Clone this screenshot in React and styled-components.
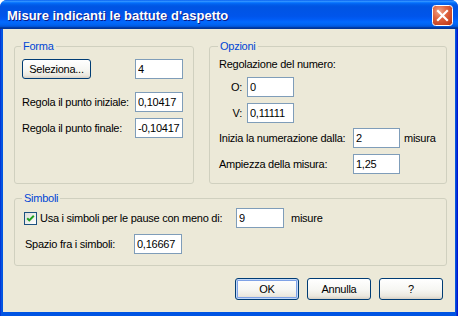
import React from "react";
import styled, { createGlobalStyle } from "styled-components";

const GlobalStyle = createGlobalStyle`
  html, body {
    margin: 0;
    padding: 0;
    background: #ffffff;
  }
  body {
    font-family: "Liberation Sans", Arial, sans-serif;
    font-size: 11px;
    letter-spacing: -0.25px;
    color: #000000;
  }
`;

const CloseIcon = () => (
  <svg width="21" height="21" viewBox="0 0 21 21">
    <defs>
      <radialGradient id="closeFill" cx="35%" cy="30%" r="80%">
        <stop offset="0%" stopColor="#F0A58A" />
        <stop offset="45%" stopColor="#E06540" />
        <stop offset="100%" stopColor="#C13A1A" />
      </radialGradient>
    </defs>
    <rect x="0.5" y="0.5" width="20" height="20" rx="3" fill="url(#closeFill)" stroke="#ffffff" />
    <path d="M6 6 L15 15 M15 6 L6 15" stroke="#ffffff" strokeWidth="2.2" strokeLinecap="square" />
  </svg>
);

const CheckIcon = () => (
  <svg width="13" height="13" viewBox="0 0 13 13">
    <defs>
      <linearGradient id="boxFill" x1="0" y1="0" x2="1" y2="1">
        <stop offset="0%" stopColor="#DCDCD7" />
        <stop offset="100%" stopColor="#FFFFFF" />
      </linearGradient>
    </defs>
    <rect x="0.5" y="0.5" width="12" height="12" fill="url(#boxFill)" stroke="#1C5180" />
    <path d="M3.2 6.2 L5.3 8.4 L9.8 3.8" fill="none" stroke="#21A121" strokeWidth="2" />
  </svg>
);

export default function App() {
  return (
    <>
      <GlobalStyle />
      <Window>
        <TitleBar>
          <Title>Misure indicanti le battute d'aspetto</Title>
          <CloseButton>
            <CloseIcon />
          </CloseButton>
        </TitleBar>
        <Body>
          <GroupRow>
            <Group $w={180} $pad="6px 8px 8px 7px">
              <Legend>Forma</Legend>
              <Row>
                <Cell $w={113}>
                  <Button $w={69} $h={20}>Seleziona...</Button>
                </Cell>
                <Field $w={48} defaultValue="4" />
              </Row>
              <Row $mt={13}>
                <Cell $w={113}>Regola il punto iniziale:</Cell>
                <Field $w={48} defaultValue="0,10417" />
              </Row>
              <Row $mt={6}>
                <Cell $w={113}>Regola il punto finale:</Cell>
                <Field $w={48} defaultValue="-0,10417" />
              </Row>
            </Group>
            <Group $w={238} $pad="5px 8px 9px 9px">
              <Legend>Opzioni</Legend>
              <Text>Regolazione del numero:</Text>
              <Row $mt={6}>
                <Cell $w={28} $right>O:</Cell>
                <Field $w={47} defaultValue="0" />
              </Row>
              <Row $mt={6}>
                <Cell $w={28} $right>V:</Cell>
                <Field $w={47} defaultValue="0,11111" />
              </Row>
              <Row $mt={5}>
                <Cell $w={134}>Inizia la numerazione dalla:</Cell>
                <Field $w={47} defaultValue="2" />
                <Unit>misura</Unit>
              </Row>
              <Row $mt={6}>
                <Cell $w={134}>Ampiezza della misura:</Cell>
                <Field $w={47} defaultValue="1,25" />
              </Row>
            </Group>
          </GroupRow>
          <Group $pad="3px 8px 11px 8px" $mt={8}>
            <Legend>Simboli</Legend>
            <Row>
              <Cell $w={213}>
                <Check>
                  <CheckIcon />
                  <span>Usa i simboli per le pause con meno di:</span>
                </Check>
              </Cell>
              <Field $w={48} defaultValue="9" />
              <Unit $gap={7}>misure</Unit>
            </Row>
            <Row $mt={6}>
              <Cell $w={111} $indent={2}>Spazio fra i simboli:</Cell>
              <Field $w={48} defaultValue="0,16667" />
            </Row>
          </Group>
          <ButtonRow>
            <Button $w={64} $h={22} $default>OK</Button>
            <Button $w={64} $h={22}>Annulla</Button>
            <Button $w={64} $h={22}>?</Button>
          </ButtonRow>
        </Body>
      </Window>
    </>
  );
}

const Window = styled.div`
  width: 458px;
  height: 316px;
  box-sizing: border-box;
  display: flex;
  flex-direction: column;
  border-radius: 7px 7px 0 0;
  overflow: hidden;
  background: linear-gradient(to right, #0019CF 0px, #0855DD 1px, #0054E3 2px, #0054E3 455px, #0855DD 456px, #0019CF 457px);
`;

const TitleBar = styled.div`
  height: 29px;
  flex: 0 0 29px;
  display: flex;
  align-items: flex-start;
  justify-content: space-between;
  padding: 0 5px 0 7px;
  box-sizing: border-box;
  background: linear-gradient(
    to bottom,
    #0058ee 0%,
    #3593ff 4%,
    #288eff 6%,
    #127dff 8%,
    #036ffc 10%,
    #0262ee 14%,
    #0057e5 20%,
    #0054e3 24%,
    #0055eb 56%,
    #005bf5 66%,
    #026afe 76%,
    #0062ef 86%,
    #0052d6 92%,
    #0040ab 94%,
    #003092 100%
  );
`;

const Title = styled.div`
  padding-top: 8px;
  font-family: "Liberation Sans", Arial, sans-serif;
  font-weight: bold;
  font-size: 13px;
  letter-spacing: 0;
  line-height: 15px;
  color: #ffffff;
  text-shadow: 1px 1px 0 #0a1883;
`;

const CloseButton = styled.div`
  margin-top: 5px;
  width: 21px;
  height: 21px;
  display: flex;
`;

const Body = styled.div`
  flex: 1;
  margin: 0 3px 4px;
  background: #ece9d8;
  display: flex;
  flex-direction: column;
  padding: 11px 8px 0 11px;
`;

const GroupRow = styled.div`
  display: flex;
  gap: 15px;
  align-items: stretch;
`;

const Group = styled.fieldset`
  margin: ${(p) => p.$mt || 0}px 0 0;
  width: ${(p) => (p.$w ? `${p.$w}px` : "auto")};
  box-sizing: border-box;
  min-width: 0;
  border: 1px solid #d0d0bf;
  border-radius: 3px;
  padding: ${(p) => p.$pad};
`;

const Legend = styled.legend`
  color: #0046d5;
  font-size: 11px;
  line-height: 13px;
  padding: 0 2px;
  margin-left: -1px;
`;

const Row = styled.div`
  display: flex;
  align-items: center;
  margin-top: ${(p) => p.$mt || 0}px;
`;

const Cell = styled.div`
  width: ${(p) => p.$w}px;
  flex: 0 0 ${(p) => p.$w}px;
  box-sizing: border-box;
  text-align: ${(p) => (p.$right ? "right" : "left")};
  padding-right: ${(p) => (p.$right ? 5 : 0)}px;
  padding-left: ${(p) => p.$indent || 0}px;
  line-height: 13px;
  white-space: nowrap;
`;

const Text = styled.div`
  line-height: 13px;
`;

const Unit = styled.span`
  margin-left: ${(p) => p.$gap || 4}px;
  line-height: 13px;
`;

const Field = styled.input`
  width: ${(p) => p.$w}px;
  height: 20px;
  box-sizing: border-box;
  border: 1px solid #7f9db9;
  background: #ffffff;
  padding: 0 1px 0 2px;
  margin: 0;
  font-family: "Liberation Sans", Arial, sans-serif;
  font-size: 11px;
  letter-spacing: -0.25px;
  color: #000000;
  outline: none;
`;

const Check = styled.label`
  display: flex;
  align-items: center;
  gap: 3px;
  margin-left: 1px;
  & svg {
    flex: 0 0 13px;
  }
`;

const Button = styled.button`
  width: ${(p) => p.$w}px;
  height: ${(p) => p.$h}px;
  box-sizing: border-box;
  padding: 0;
  margin: 0;
  border: 1px solid #003c74;
  border-radius: 3px;
  background: linear-gradient(to bottom, #ffffff 0%, #f6f6f2 55%, #ebe8df 85%, #d6d0c5 100%);
  font-family: "Liberation Sans", Arial, sans-serif;
  font-size: 11px;
  letter-spacing: -0.25px;
  color: #000000;
  box-shadow: ${(p) =>
    p.$default
      ? "inset 0 0 0 1px #c2d8f8, inset 0 0 0 2px #7fa2e6"
      : "none"};
`;

const ButtonRow = styled.div`
  display: flex;
  justify-content: flex-end;
  gap: 8px;
  margin-top: 12px;
  padding-right: 4px;
`;
